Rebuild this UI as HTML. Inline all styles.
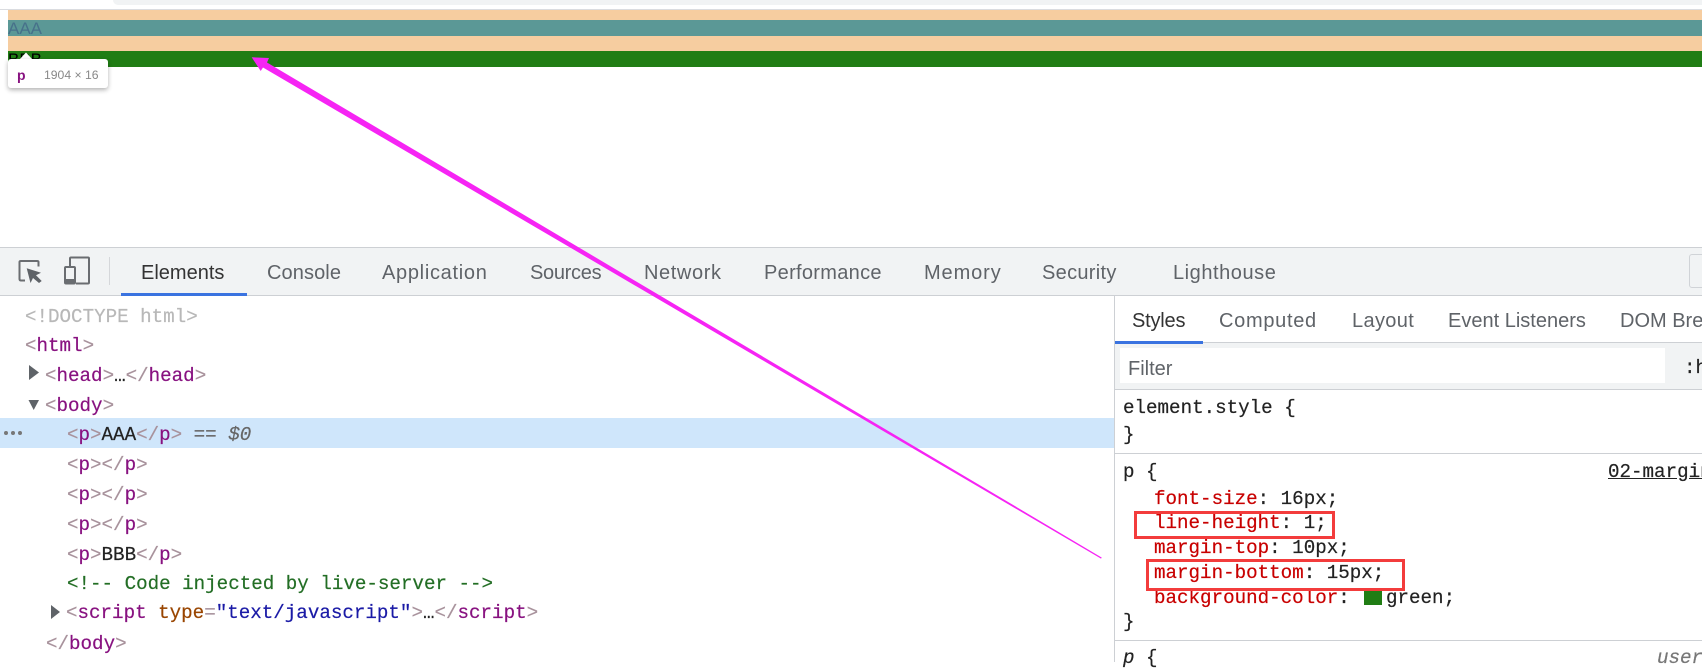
<!DOCTYPE html>
<html><head><meta charset="utf-8"><style>
html,body{margin:0;padding:0;background:#fff;width:1702px;height:662px;overflow:hidden}
div,span.a{position:absolute}
.t{position:absolute;font:20px/24px "Liberation Sans",sans-serif;color:#5f6368;white-space:pre}
.m{position:absolute;font:19.2px/24px "Liberation Mono",monospace;white-space:pre;color:#222;-webkit-text-stroke:.2px currentColor}
.g{color:#a8929c}.p{color:#881280}.k{color:#c80000}.y{color:#b8b8b8}
</style></head><body>
<div style="left:113px;top:0;width:1589px;height:5px;background:#f1f3f4;border-bottom-left-radius:5px"></div>
<div style="left:0;top:9px;width:1702px;height:1px;background:#dadce0"></div>
<div style="left:8px;top:10px;width:1694px;height:10px;background:#f6cda0"></div>
<div style="left:8px;top:20px;width:1694px;height:16px;background:#5b9896"></div>
<div style="left:8px;top:36px;width:1694px;height:15px;background:#f6cda0"></div>
<div style="left:8px;top:51px;width:1694px;height:16px;background:#207d14"></div>
<div style="left:8px;top:19px;font:17px/19px 'Liberation Sans',sans-serif;color:#47718a">AAA</div>
<div style="left:8px;top:50px;font:17px/19px 'Liberation Sans',sans-serif;color:#000">BBB</div>
<svg style="position:absolute;left:0;top:50px" width="40" height="12"><polygon points="19,10 26,2.5 33,10" fill="#fff"/></svg>
<div style="left:8px;top:59px;width:100px;height:29px;background:#fff;border-radius:3px;box-shadow:0 2px 5px rgba(0,0,0,.3)"></div>
<div style="left:17px;top:66px;font:bold 14px/18px 'Liberation Sans',sans-serif;color:#881280">p</div>
<div style="left:44px;top:66px;font:12.2px/18px 'Liberation Sans',sans-serif;color:#888">1904 × 16</div>

<div style="left:0;top:247px;width:1702px;height:47px;background:#f1f3f4;border-top:1px solid #cdd0d4;border-bottom:1px solid #cdd0d4"></div>
<svg style="position:absolute;left:0;top:240px" width="120" height="56">
<path d="M25 40.5H21Q19.5 40.5 19.5 39V22Q19.5 21 21 21H37Q38.5 21 38.5 22V26.5" fill="none" stroke="#6a6d71" stroke-width="2"/>
<polygon points="26.7,28.3 41,32.7 36,35.3 41.7,41 39,43 33,38 30.5,43" fill="#5f6368"/>
<path d="M76 43.5H88Q89 43.5 89 42.5V18.5Q89 17.5 88 17.5H71Q70 17.5 70 18.5V26" fill="none" stroke="#6a6d71" stroke-width="2"/>
<rect x="65" y="27" width="10" height="16.5" rx="1" fill="none" stroke="#6a6d71" stroke-width="2"/>
<rect x="65" y="39" width="10" height="5" fill="#6a6d71"/>
<rect x="109" y="17" width="1" height="28" fill="#d5d7da"/>
</svg>
<div style="left:121px;top:293px;width:126px;height:3px;background:#3a73e0"></div>
<span class="t" style="left:141px;top:261px;color:#333">Elements</span>
<span class="t" style="left:267px;top:261px;letter-spacing:.1px">Console</span>
<span class="t" style="left:382px;top:261px;letter-spacing:.7px">Application</span>
<span class="t" style="left:530px;top:261px;letter-spacing:-.3px">Sources</span>
<span class="t" style="left:644px;top:261px;letter-spacing:.6px">Network</span>
<span class="t" style="left:764px;top:261px;letter-spacing:.3px">Performance</span>
<span class="t" style="left:924px;top:261px;letter-spacing:.9px">Memory</span>
<span class="t" style="left:1042px;top:261px;letter-spacing:.3px">Security</span>
<span class="t" style="left:1173px;top:261px;letter-spacing:.55px">Lighthouse</span>
<div style="left:1689px;top:254px;width:30px;height:32px;border:1px solid #d0d3d7;border-radius:3px;background:#f1f3f4"></div>

<div style="left:0;top:418px;width:1114px;height:30px;background:#cfe6fb"></div>
<div style="left:4px;top:431px;width:4px;height:4px;border-radius:2px;background:#777;box-shadow:7px 0 0 #777,14px 0 0 #777"></div>
<svg style="position:absolute;left:0;top:360px" width="70" height="270">
<polygon points="29,5 39,12.5 29,20" fill="#5f6368"/>
<polygon points="28.5,40 39,40 33.7,50" fill="#5f6368"/>
<polygon points="51,245 60,252 51,259" fill="#5f6368"/>
</svg>
<span class="m y" style="left:25px;top:305px">&lt;!DOCTYPE html&gt;</span>
<span class="m" style="left:25px;top:334px"><span class="g">&lt;</span><span class="p">html</span><span class="g">&gt;</span></span>
<span class="m" style="left:45px;top:364px"><span class="g">&lt;</span><span class="p">head</span><span class="g">&gt;</span>…<span class="g">&lt;/</span><span class="p">head</span><span class="g">&gt;</span></span>
<span class="m" style="left:45px;top:394px"><span class="g">&lt;</span><span class="p">body</span><span class="g">&gt;</span></span>
<span class="m" style="left:67px;top:423px"><span class="g">&lt;</span><span class="p">p</span><span class="g">&gt;</span>AAA<span class="g">&lt;/</span><span class="p">p</span><span class="g">&gt;</span> <i style="color:#666">== $0</i></span>
<span class="m" style="left:67px;top:453px"><span class="g">&lt;</span><span class="p">p</span><span class="g">&gt;&lt;/</span><span class="p">p</span><span class="g">&gt;</span></span>
<span class="m" style="left:67px;top:483px"><span class="g">&lt;</span><span class="p">p</span><span class="g">&gt;&lt;/</span><span class="p">p</span><span class="g">&gt;</span></span>
<span class="m" style="left:67px;top:513px"><span class="g">&lt;</span><span class="p">p</span><span class="g">&gt;&lt;/</span><span class="p">p</span><span class="g">&gt;</span></span>
<span class="m" style="left:67px;top:543px"><span class="g">&lt;</span><span class="p">p</span><span class="g">&gt;</span>BBB<span class="g">&lt;/</span><span class="p">p</span><span class="g">&gt;</span></span>
<span class="m" style="left:67px;top:572px;color:#236e25">&lt;!-- Code injected by live-server --&gt;</span>
<span class="m" style="left:66px;top:601px"><span class="g">&lt;</span><span class="p">script</span> <span style="color:#994500">type</span><span class="g">=</span><span style="color:#1a1aa6">"text/javascript"</span><span class="g">&gt;</span>…<span class="g">&lt;/</span><span class="p">script</span><span class="g">&gt;</span></span>
<span class="m" style="left:46px;top:632px"><span class="g">&lt;/</span><span class="p">body</span><span class="g">&gt;</span></span>

<div style="left:1114px;top:296px;width:1px;height:366px;background:#cdd0d4"></div>
<div style="left:1115px;top:342px;width:587px;height:1px;background:#cdd0d4"></div>
<div style="left:1115px;top:343px;width:587px;height:46px;background:#f1f3f4"></div>
<div style="left:1115px;top:341px;width:88px;height:3px;background:#3a73e0"></div>
<div style="left:1115px;top:389px;width:587px;height:1px;background:#cdd0d4"></div>
<div style="left:1120px;top:348px;width:545px;height:35px;background:#fff"></div>
<span class="t" style="left:1132px;top:309px;color:#333;letter-spacing:-.2px">Styles</span>
<span class="t" style="left:1219px;top:309px;letter-spacing:.7px">Computed</span>
<span class="t" style="left:1352px;top:309px;letter-spacing:.35px">Layout</span>
<span class="t" style="left:1448px;top:309px">Event Listeners</span>
<span class="t" style="left:1620px;top:309px">DOM Breakpoints</span>
<span class="t" style="left:1128px;top:357px">Filter</span>
<span class="m" style="left:1684px;top:356px">:hov</span>
<span class="m" style="left:1123px;top:396px">element.style {</span>
<span class="m" style="left:1123px;top:423px">}</span>
<div style="left:1115px;top:453px;width:587px;height:1px;background:#cdd0d4"></div>
<span class="m" style="left:1123px;top:460px">p {</span>
<span class="m" style="left:1608px;top:460px;text-decoration:underline">02-margin</span>
<span class="m" style="left:1154px;top:487px"><span class="k">font-size</span>: 16px;</span>
<span class="m" style="left:1154px;top:511px"><span class="k">line-height</span>: 1;</span>
<span class="m" style="left:1154px;top:536px"><span class="k">margin-top</span>: 10px;</span>
<span class="m" style="left:1154px;top:561px"><span class="k">margin-bottom</span>: 15px;</span>
<span class="m" style="left:1154px;top:586px"><span class="k">background-color</span>:</span>
<div style="left:1364px;top:590px;width:18px;height:15px;background:#207d14"></div>
<span class="m" style="left:1386px;top:586px">green;</span>
<span class="m" style="left:1123px;top:610px">}</span>
<div style="left:1115px;top:640px;width:587px;height:1px;background:#cdd0d4"></div>
<span class="m" style="left:1123px;top:646px"><i>p</i> {</span>
<span class="m" style="left:1657px;top:646px;color:#777"><i>user a</i></span>
<div style="left:1134px;top:511px;width:195px;height:22px;border:3px solid #f33c3c"></div>
<div style="left:1146px;top:559px;width:253px;height:26px;border:3px solid #f33c3c"></div>

<svg style="position:absolute;left:0;top:0" width="1702" height="662">
<polygon points="251.7,57.3 269,58 267,62.5 1101.8,557.6 1101,558.6 263,67.5 260.7,71" fill="#f624f4"/>
</svg>
</body></html>
